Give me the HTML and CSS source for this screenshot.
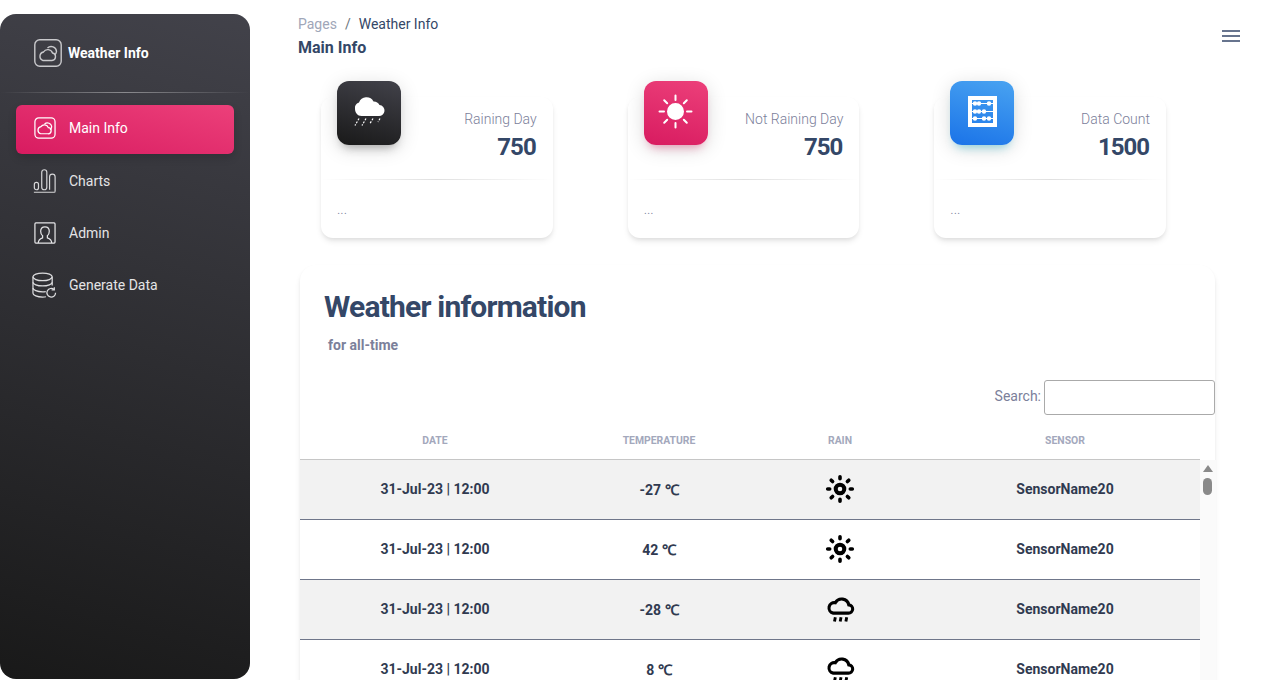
FILE: index.html
```html
<!DOCTYPE html>
<html lang="en">
<head>
	<meta charset="UTF-8">
	<title>Weather Info</title>
	<link rel="stylesheet" href="styles.css">
</head>
<body>

	<aside class="sidebar">
		<div class="brand">
			<svg class="brand-icon" viewBox="0 0 28 28" fill="none" stroke="#c9c9cc" stroke-width="1.4">
				<rect x="0.8" y="0.8" width="26.4" height="26.4" rx="5"/>
				<path d="M9 21.500H18a3.800 3.800 0 0 0 .5-7.500a5 5 0 0 0-9-1a4.400 4.400 0 0 0-.5 8.500z"/>
				<path d="M13.500 9a5.300 5.300 0 0 1 9 3.500a5.300 5.300 0 0 1-2 3.500"/>
			</svg>
			<span>Weather Info</span>
		</div>
		<hr class="side-line">
		<nav class="side-nav">
			<a class="side-link active" href="#">
				<svg class="side-icon" viewBox="0 0 24 24" fill="none" stroke="#fff" stroke-width="1.300">
					<rect x="2" y="1.500" width="21" height="21" rx="4"/>
					<path d="M8 18H15.500a3.200 3.200 0 0 0 .5-6.400a4.300 4.300 0 0 0-7.700-1a3.800 3.800 0 0 0-.3 7.400z"/>
					<path d="M12 8a4.400 4.400 0 0 1 7.500 3a4.400 4.400 0 0 1-1.700 3"/>
				</svg>
				Main Info
			</a>
			<a class="side-link" href="#">
				<svg class="side-icon" viewBox="0 0 24 26" fill="none" stroke="#d6d6d8" stroke-width="1.300">
					<path d="M.5 25.200H22.500a1 1 0 0 0 1-1"/>
					<rect x="1" y="14.500" width="4.500" height="8" rx="2.200"/>
					<rect x="9" y=".8" width="5.500" height="21.700" rx="2.700"/>
					<path d="M17.500 22.500V8.500a3 3 0 0 1 6 0V24"/>
				</svg>
				Charts
			</a>
			<a class="side-link" href="#">
				<svg class="side-icon" viewBox="0 0 24 24" fill="none" stroke="#e4e4e6" stroke-width="1.300">
					<rect x="2" y="1.500" width="21" height="21" rx="1"/>
					<path d="M5.500 22.500c0-3.500 1.500-4.500 4.500-5.500v-2.200c-1.400-1-2-2.700-2-4.600c0-2.700 1.800-4.700 4.500-4.700s4.500 2 4.500 4.700c0 1.900-.6 3.600-2 4.600V17c3 1 4.500 2 4.500 5.500"/>
				</svg>
				Admin
			</a>
			<a class="side-link" href="#">
				<svg class="side-icon side-icon-wide" viewBox="0 0 26 28" fill="none" stroke="#dcdcde" stroke-width="1.300">
					<ellipse cx="11" cy="5" rx="10" ry="4"/>
					<path d="M1 5V22c0 2.200 4.500 4 10 4c1.300 0 2.500-.1 3.500-.3"/>
					<path d="M21 5v9"/>
					<path d="M1 10.500c0 2.200 4.500 4 10 4s10-1.800 10-4"/>
					<path d="M1 16.500c0 2.200 4.500 4 10 4c1.200 0 2.300-.1 3.300-.2"/>
					<path d="M24.500 21.500a4.500 4.500 0 1 1-1.500-3.300"/>
					<path d="M23.200 15.800v2.800h-2.800"/>
				</svg>
				Generate Data
			</a>
		</nav>
	</aside>

	<main class="content">
		<header class="topbar">
			<div>
				<p class="crumbs"><span class="crumb-muted">Pages</span><span class="crumb-sep">/</span>Weather Info</p>
				<h6 class="page-title">Main Info</h6>
			</div>
			<div class="burger">
				<i></i><i></i><i></i>
			</div>
		</header>

		<section class="stats">
			<div class="stat-card">
				<div class="stat-top">
					<div class="stat-icon icon-dark">
						<svg viewBox="0 0 64 64" fill="#fff">
							<path d="M24 35H41.500a5.500 5.500 0 0 0 1-11a6.500 6.500 0 0 0-6-3.500a8 8 0 0 0-14.500 1a6 6 0 0 0-4 6.500c0 3.500 2.500 7 6.500 7z"/>
							<g stroke="#fff" stroke-width="1.200" stroke-dasharray="2 1.400">
								<path d="M22 37.500l-4 7"/>
								<path d="M29 37.500l-4 7"/>
								<path d="M36 37.500l-3 5"/>
								<path d="M43 37.500l-2 3.500"/>
							</g>
						</svg>
					</div>
					<div class="stat-text">
						<p>Raining Day</p>
						<h4>750</h4>
					</div>
				</div>
				<hr class="card-line">
				<p class="stat-foot">...</p>
			</div>

			<div class="stat-card">
				<div class="stat-top">
					<div class="stat-icon icon-pink">
						<svg viewBox="0 0 64 64" fill="#fff" stroke="#fff" stroke-width="2" stroke-linecap="round">
							<circle cx="31.500" cy="30.500" r="7.500"/>
							<path d="M31.500 14.500v4.500M31.500 42v4.500M15.500 30.500H20M43 30.500h4.500M20.200 19.200l3 3M39.800 38.800l3 3M20.200 41.800l3-3M39.800 22.200l3-3"/>
						</svg>
					</div>
					<div class="stat-text">
						<p>Not Raining Day</p>
						<h4>750</h4>
					</div>
				</div>
				<hr class="card-line">
				<p class="stat-foot">...</p>
			</div>

			<div class="stat-card">
				<div class="stat-top">
					<div class="stat-icon icon-blue">
						<svg viewBox="0 0 64 64">
							<path fill="#fff" fill-rule="evenodd" d="M18 15H47V46H18zM22 19V42H43V19z"/>
							<g stroke="#fff" stroke-width="1.200">
								<path d="M22 22.500H43M22 30.500H43M22 37.500H43"/>
							</g>
							<g fill="#fff">
								<circle cx="25" cy="22.500" r="2.200"/><circle cx="29" cy="22.500" r="2.200"/><circle cx="39" cy="22.500" r="2.200"/>
								<circle cx="25" cy="30.500" r="2.200"/><circle cx="29" cy="30.500" r="2.200"/><circle cx="34" cy="30.500" r="2.200"/>
								<circle cx="25" cy="37.500" r="2.200"/><circle cx="34" cy="37.500" r="2.200"/><circle cx="39" cy="37.500" r="2.200"/>
							</g>
						</svg>
					</div>
					<div class="stat-text">
						<p>Data Count</p>
						<h4>1500</h4>
					</div>
				</div>
				<hr class="card-line">
				<p class="stat-foot">...</p>
			</div>
		</section>

		<section class="panel">
			<h2 class="panel-title">Weather information</h2>
			<p class="panel-sub">for all-time</p>
			<div class="search-row">
				<label for="search">Search:</label>
				<input id="search" type="text">
			</div>
			<div class="table-head">
				<span>Date</span>
				<span>Temperature</span>
				<span>Rain</span>
				<span>Sensor</span>
			</div>
			<div class="table-wrap">
				<div class="table-rows">
					<div class="row">
						<span>31-Jul-23 | 12:00</span>
						<span>-27 <span class="deg">℃</span></span>
						<span class="rain-cell">
							<svg class="sun" viewBox="0 0 30 30" fill="none" stroke="#000">
								<circle cx="15" cy="15" r="4.300" stroke-width="4"/>
								<path stroke-width="3.600" stroke-linecap="round" d="M15 2.700v2M15 25.300v2M2.700 15h2M25.300 15h2M6.200 6.200l1.400 1.400M22.400 22.400l1.400 1.400M6.200 23.800l1.400-1.400M22.400 7.600l1.400-1.400"/>
							</svg>
						</span>
						<span>SensorName20</span>
					</div>
					<div class="row">
						<span>31-Jul-23 | 12:00</span>
						<span>42 <span class="deg">℃</span></span>
						<span class="rain-cell">
							<svg class="sun" viewBox="0 0 30 30" fill="none" stroke="#000">
								<circle cx="15" cy="15" r="4.300" stroke-width="4"/>
								<path stroke-width="3.600" stroke-linecap="round" d="M15 2.700v2M15 25.300v2M2.700 15h2M25.300 15h2M6.200 6.200l1.400 1.400M22.400 22.400l1.400 1.400M6.200 23.800l1.400-1.400M22.400 7.600l1.400-1.400"/>
							</svg>
						</span>
						<span>SensorName20</span>
					</div>
					<div class="row">
						<span>31-Jul-23 | 12:00</span>
						<span>-28 <span class="deg">℃</span></span>
						<span class="rain-cell">
							<svg class="cloud" viewBox="0 0 28 26" fill="none" stroke="#000" stroke-width="3">
								<path d="M7 16.500H21.500a4 4 0 0 0 .5-8a7 7 0 0 0-13-2a5 5 0 0 0-2 10z"/>
								<path stroke-width="2.800" d="M9 20.500l-.8 4M14.500 20.500l-.8 4M20 20.500l-.8 4"/>
							</svg>
						</span>
						<span>SensorName20</span>
					</div>
					<div class="row">
						<span>31-Jul-23 | 12:00</span>
						<span>8 <span class="deg">℃</span></span>
						<span class="rain-cell">
							<svg class="cloud" viewBox="0 0 28 26" fill="none" stroke="#000" stroke-width="3">
								<path d="M7 16.500H21.500a4 4 0 0 0 .5-8a7 7 0 0 0-13-2a5 5 0 0 0-2 10z"/>
								<path stroke-width="2.800" d="M9 20.500l-.8 4M14.500 20.500l-.8 4M20 20.500l-.8 4"/>
							</svg>
						</span>
						<span>SensorName20</span>
					</div>
				</div>
				<div class="scroll-track">
					<div class="scroll-arrow"></div>
					<div class="scroll-thumb"></div>
				</div>
			</div>
		</section>
	</main>

</body>
</html>
```

FILE: styles.css
```css
* {
	box-sizing: border-box;
}
html, body {
	height: 680px;
	overflow: hidden;
}
body {
	margin: 0;
	display: flex;
	background-color: #fff;
	font-family: Roboto, "Liberation Sans", sans-serif;
	color: #344767;
}

/* sidebar */
.sidebar {
	flex: 0 0 250px;
	height: 665px;
	margin-top: 14px;
	border-radius: 16px;
	background-image: linear-gradient(195deg, #42424a, #191919);
}
.brand {
	display: flex;
	align-items: center;
	gap: 6px;
	height: 78px;
	padding-left: 34px;
	color: #fff;
	font-size: 14px;
	font-weight: 700;
}
.brand-icon {
	width: 28px;
	height: 28px;
}
.side-line {
	height: 1px;
	margin: 0 0 12px;
	border: 0;
	background-image: linear-gradient(to right, rgba(255,255,255,0), rgba(255,255,255,.4), rgba(255,255,255,0));
}
.side-nav {
	display: flex;
	flex-direction: column;
	gap: 3.800px;
	padding: 0 16px;
}
.side-link {
	display: flex;
	align-items: center;
	gap: 13px;
	height: 48.500px;
	padding: 0 0 2px 17px;
	border-radius: 6px;
	color: #e4e4e6;
	font-size: 14px;
	text-decoration: none;
}
.side-link.active {
	color: #fff;
	background-image: linear-gradient(195deg, #ec407a, #d81b60);
	box-shadow: 0 4px 8px rgba(0,0,0,.14);
}
.side-icon {
	flex: 0 0 23px;
	width: 23px;
	height: 24px;
}
.side-icon-wide {
	flex-basis: 25px;
	width: 25px;
	height: 27px;
	margin: 0 -1px;
}

/* main area */
.content {
	flex: 1;
	min-width: 0;
	padding: 14px 41px 0 48px;
}
.topbar {
	display: flex;
	justify-content: space-between;
	align-items: center;
}
.crumbs {
	margin: 0;
	font-size: 14px;
	line-height: 20px;
}
.crumb-muted {
	color: #a0a6b8;
}
.crumb-sep {
	margin: 0 8px;
	color: #6c757d;
}
.page-title {
	margin: 1px 0 0;
	padding-top: 1px;
	font-size: 16px;
	line-height: 24px;
	font-weight: 700;
}
.burger {
	display: flex;
	flex-direction: column;
	gap: 3px;
	width: 18px;
	margin-bottom: 2px;
}
.burger i {
	display: block;
	height: 2px;
	background-color: #67748e;
}

/* stat cards */
.stats {
	display: grid;
	grid-template-columns: repeat(3, 1fr);
	column-gap: 75px;
	width: 845px;
	margin: 37px 0 0 23px;
}
.stat-card {
	height: 141px;
	padding: 0 16px;
	border-radius: 12px;
	background-color: #fff;
	box-shadow: 0 4px 6px -1px rgba(0,0,0,.1), 0 2px 4px -1px rgba(0,0,0,.06);
}
.stat-top {
	display: flex;
	justify-content: space-between;
}
.stat-icon {
	width: 64px;
	height: 64px;
	margin-top: -16px;
	border-radius: 12px;
}
.stat-icon svg {
	display: block;
	width: 64px;
	height: 64px;
}
.icon-dark {
	background-image: linear-gradient(195deg, #42424a, #191919);
	box-shadow: 0 4px 20px rgba(0,0,0,.14), 0 7px 10px -5px rgba(64,64,64,.4);
}
.icon-pink {
	background-image: linear-gradient(195deg, #ec407a, #d81b60);
	box-shadow: 0 4px 20px rgba(0,0,0,.14), 0 7px 10px -5px rgba(233,30,99,.4);
}
.icon-blue {
	background-image: linear-gradient(195deg, #49a3f1, #1a73e8);
	box-shadow: 0 4px 20px rgba(0,0,0,.14), 0 7px 10px -5px rgba(0,188,212,.4);
}
.stat-text {
	padding-top: 12px;
	text-align: right;
}
.stat-text p {
	margin: 0;
	color: #7b809a;
	font-size: 14px;
	font-weight: 300;
	line-height: 20px;
}
.stat-text h4 {
	margin: 1px 1px 0 0;
	font-size: 24px;
	font-weight: 700;
	line-height: 34px;
	letter-spacing: -1px;
}
.card-line {
	height: 1px;
	margin: 15px -16px 0;
	border: 0;
	background-image: linear-gradient(to right, rgba(0,0,0,0), rgba(0,0,0,.12), rgba(0,0,0,0));
}
.stat-foot {
	margin: 19px 0 0;
	color: #7b809a;
	font-size: 14px;
	font-weight: 300;
	line-height: 20px;
}

/* weather table panel */
.panel {
	width: 915px;
	height: 500px;
	margin: 27px 0 0 2px;
	padding-top: 22px;
	border-radius: 16px;
	background-color: #fff;
	box-shadow: 0 4px 6px -1px rgba(0,0,0,.1), 0 2px 4px -1px rgba(0,0,0,.06);
}
.panel-title {
	margin: 0 0 0 24px;
	font-size: 30px;
	font-weight: 700;
	line-height: 40px;
	letter-spacing: -.8px;
}
.panel-sub {
	margin: 8px 0 0 28px;
	color: #7b809a;
	font-size: 14px;
	font-weight: 700;
	line-height: 20px;
}
.search-row {
	display: flex;
	justify-content: flex-end;
	align-items: center;
	gap: 3px;
	margin-top: 25px;
	color: #7b809a;
	font-size: 14px;
}
.search-row label {
	margin-bottom: 4px;
}
.search-row input {
	width: 171px;
	height: 35px;
	border: 1px solid #aaa;
	border-radius: 3px;
	background-color: transparent;
}
.table-head, .row {
	display: grid;
	grid-template-columns: 270px 178px 184px 266px;
	align-items: center;
	text-align: center;
}
.table-head {
	width: 900px;
	height: 45px;
	padding-top: 6px;
	border-bottom: 1px solid #c6c6c6;
	color: #a3a8bc;
	font-size: 10.400px;
	font-weight: 700;
	text-transform: uppercase;
}
.table-wrap {
	display: flex;
}
.table-rows {
	flex: 0 0 900px;
}
.row {
	height: 60px;
	padding-bottom: 2px;
	border-bottom: 1px solid #6f768a;
	color: #303a50;
	font-size: 14px;
	font-weight: 700;
}
.row:nth-child(odd) {
	background-color: #f2f2f2;
}
.deg {
	font-family: "Liberation Serif", serif;
	font-size: 14.500px;
}
.rain-cell {
	display: flex;
	justify-content: center;
	align-items: center;
}
.sun {
	width: 30px;
	height: 30px;
}
.cloud {
	width: 29px;
	height: 27px;
	margin-top: 1px;
}

/* fake scrollbar, the rows are cut by the window anyway */
.scroll-track {
	flex: 0 0 15px;
	padding: 5px 3px 0;
	background-color: #fafafa;
}
.scroll-arrow {
	width: 0;
	height: 0;
	margin: 0 auto;
	border-left: 5px solid transparent;
	border-right: 5px solid transparent;
	border-bottom: 7px solid #8a8a8a;
}
.scroll-thumb {
	width: 9px;
	height: 17px;
	margin-top: 6px;
	border-radius: 5px;
	background-color: #8a8a8a;
}
```
